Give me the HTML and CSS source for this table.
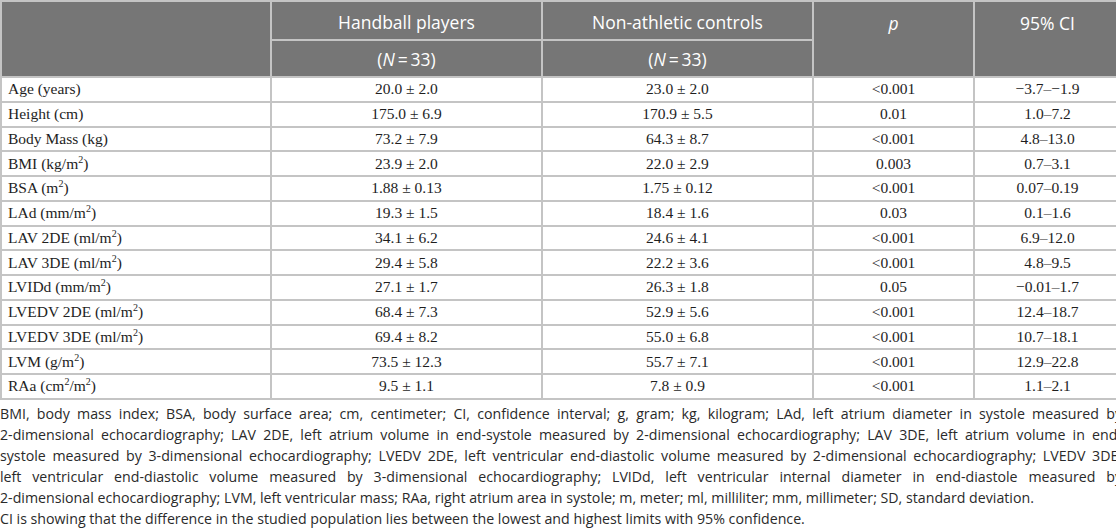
FILE: index.html
```html
<!DOCTYPE html>
<html lang="en">
<head>
  <meta charset="UTF-8" />
  <meta name="viewport" content="width=device-width, initial-scale=1.0" />
  <title>Table 1 - Handball players vs controls</title>
  <link rel="stylesheet" href="styles.css">
</head>
<body>
  <div class="page">
    <table class="data">
      <colgroup>
        <col class="c-name">
        <col class="c-group">
        <col class="c-group">
        <col class="c-p">
        <col class="c-ci">
      </colgroup>
      <thead>
        <tr class="head-top">
          <th rowspan="2"></th>
          <th>Handball players</th>
          <th>Non-athletic controls</th>
          <th rowspan="2" class="top"><i>p</i></th>
          <th rowspan="2" class="top">95% CI</th>
        </tr>
        <tr class="head-sub">
          <th>(<i>N</i>&thinsp;=&thinsp;33)</th>
          <th>(<i>N</i>&thinsp;=&thinsp;33)</th>
        </tr>
      </thead>
      <tbody>
        <tr><td>Age (years)</td><td>20.0 ± 2.0</td><td>23.0 ± 2.0</td><td>&lt;0.001</td><td>−3.7–−1.9</td></tr>
        <tr><td>Height (cm)</td><td>175.0 ± 6.9</td><td>170.9 ± 5.5</td><td>0.01</td><td>1.0–7.2</td></tr>
        <tr><td>Body Mass (kg)</td><td>73.2 ± 7.9</td><td>64.3 ± 8.7</td><td>&lt;0.001</td><td>4.8–13.0</td></tr>
        <tr><td>BMI (kg/m<sup>2</sup>)</td><td>23.9 ± 2.0</td><td>22.0 ± 2.9</td><td>0.003</td><td>0.7–3.1</td></tr>
        <tr><td>BSA (m<sup>2</sup>)</td><td>1.88 ± 0.13</td><td>1.75 ± 0.12</td><td>&lt;0.001</td><td>0.07–0.19</td></tr>
        <tr><td>LAd (mm/m<sup>2</sup>)</td><td>19.3 ± 1.5</td><td>18.4 ± 1.6</td><td>0.03</td><td>0.1–1.6</td></tr>
        <tr><td>LAV 2DE (ml/m<sup>2</sup>)</td><td>34.1 ± 6.2</td><td>24.6 ± 4.1</td><td>&lt;0.001</td><td>6.9–12.0</td></tr>
        <tr><td>LAV 3DE (ml/m<sup>2</sup>)</td><td>29.4 ± 5.8</td><td>22.2 ± 3.6</td><td>&lt;0.001</td><td>4.8–9.5</td></tr>
        <tr><td>LVIDd (mm/m<sup>2</sup>)</td><td>27.1 ± 1.7</td><td>26.3 ± 1.8</td><td>0.05</td><td>−0.01–1.7</td></tr>
        <tr><td>LVEDV 2DE (ml/m<sup>2</sup>)</td><td>68.4 ± 7.3</td><td>52.9 ± 5.6</td><td>&lt;0.001</td><td>12.4–18.7</td></tr>
        <tr><td>LVEDV 3DE (ml/m<sup>2</sup>)</td><td>69.4 ± 8.2</td><td>55.0 ± 6.8</td><td>&lt;0.001</td><td>10.7–18.1</td></tr>
        <tr><td>LVM (g/m<sup>2</sup>)</td><td>73.5 ± 12.3</td><td>55.7 ± 7.1</td><td>&lt;0.001</td><td>12.9–22.8</td></tr>
        <tr><td>RAa (cm<sup>2</sup>/m<sup>2</sup>)</td><td>9.5 ± 1.1</td><td>7.8 ± 0.9</td><td>&lt;0.001</td><td>1.1–2.1</td></tr>
      </tbody>
    </table>
    <div class="notes">
      <p class="abbr">
        <span class="ln">BMI, body mass index; BSA, body surface area; cm, centimeter; CI, confidence interval; g, gram; kg, kilogram; LAd, left atrium diameter in systole measured by</span>
        <span class="ln">2-dimensional echocardiography; LAV 2DE, left atrium volume in end-systole measured by 2-dimensional echocardiography; LAV 3DE, left atrium volume in end-</span>
        <span class="ln">systole measured by 3-dimensional echocardiography; LVEDV 2DE, left ventricular end-diastolic volume measured by 2-dimensional echocardiography; LVEDV 3DE,</span>
        <span class="ln">left ventricular end-diastolic volume measured by 3-dimensional echocardiography; LVIDd, left ventricular internal diameter in end-diastole measured by</span>
        <span>2-dimensional echocardiography; LVM, left ventricular mass; RAa, right atrium area in systole; m, meter; ml, milliliter; mm, millimeter; SD, standard deviation.</span>
      </p>
      <p>CI is showing that the difference in the studied population lies between the lowest and highest limits with 95% confidence.</p>
    </div>
  </div>
</body>
</html>
```

FILE: styles.css
```css
body {
  margin: 0;
  background: #fff;
  overflow: hidden;
}
.page {
  width: 1122px;
}
.data {
  width: 1120px;
  border-collapse: collapse;
  table-layout: fixed;
  font-family: 'Liberation Serif', 'Times New Roman', serif;
  font-size: 15.5px;
  color: #1e1e1e;
}
.c-name { width: 270px; }
.c-group { width: 271px; }
.c-p { width: 161px; }
.c-ci { width: 147px; }
.data th,
.data td {
  border: 2px solid #c4c4c4;
  padding: 0 6px;
}
.data thead th {
  background: #767676;
  color: #fff;
  font-family: 'Open Sans', 'Liberation Sans', sans-serif;
  font-weight: normal;
  font-size: 17.5px;
  text-align: center;
}
.data th i {
  font-style: italic;
}
.head-top th {
  height: 34px;
  padding-top: 3px;
}
.head-sub th {
  height: 34px;
  padding-top: 1px;
}
.data thead th.top {
  vertical-align: top;
  padding-top: 9px;
}
.data td {
  height: 22.75px;
  line-height: 20px;
  text-align: center;
  white-space: nowrap;
}
.data td:first-child {
  text-align: left;
  padding-left: 6px;
}
.data sup {
  font-size: 10px;
  line-height: 0;
  vertical-align: 6px;
}
.notes {
  margin-top: 3px;
  font-family: 'Open Sans', 'Liberation Sans', sans-serif;
  font-size: 14.2px;
  line-height: 21px;
  color: #2a2a2a;
}
.notes p {
  margin: 0;
}
.abbr span {
  display: block;
  white-space: nowrap;
}
.abbr .ln {
  text-align: justify;
  text-align-last: justify;
}
```
